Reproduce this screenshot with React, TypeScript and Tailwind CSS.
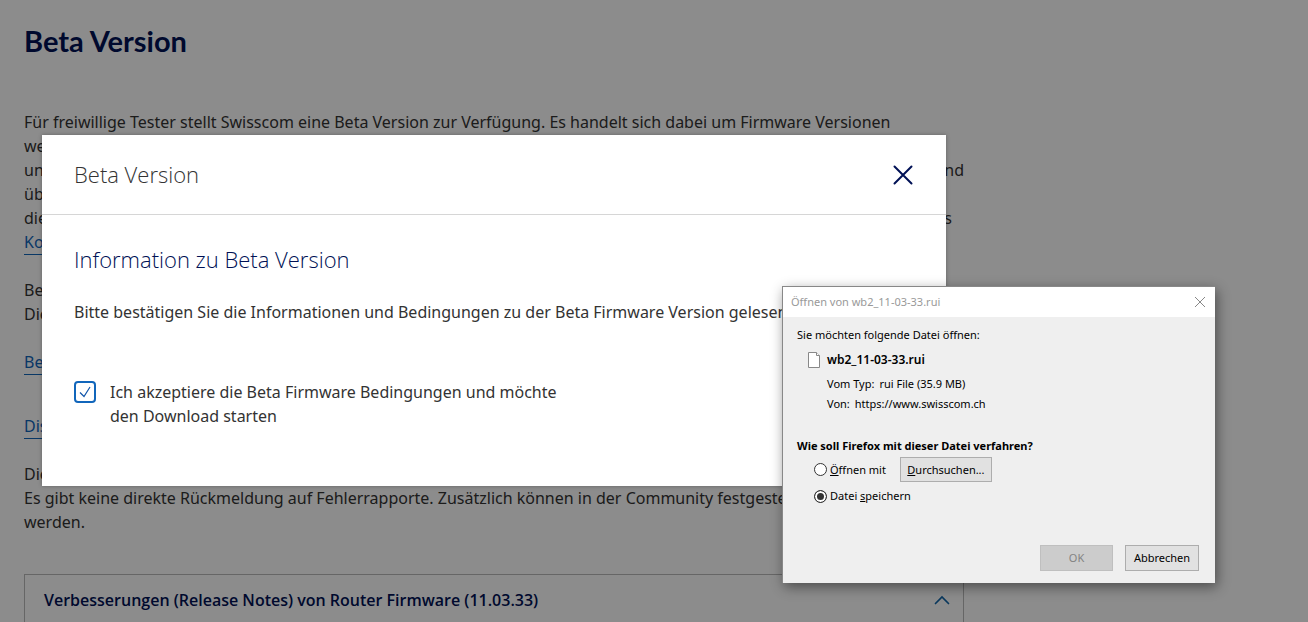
import { useState } from "react";
import type { ReactNode } from "react";

const NAVY = "text-[#001155]";
const OPEN_SANS = "font-['Open_Sans','Noto_Sans',sans-serif]";

function PageLink({ children }: { children: ReactNode }) {
  return (
    <a href="#" className="inline-block h-[25px] border-b border-[#1166bb] text-[#1166bb]">
      {children}
    </a>
  );
}

function PageContent() {
  return (
    <main className="w-full max-w-[988px] px-6 pt-5 text-base leading-6 text-[#333]">
      <h1 className={`font-['Lato','Noto_Sans',sans-serif] text-[29px] leading-[42px] font-bold ${NAVY}`}>Beta Version</h1>

      <div className="mt-12">
        <p>
          Für freiwillige Tester stellt Swisscom eine Beta Version zur Verfügung. Es handelt sich dabei um Firmware Versionen
        </p>
        <p>wel</p>
        <p className="flex justify-between">
          <span>und</span>
          <span>und</span>
        </p>
        <p>über</p>
        <p className="flex justify-between pr-3">
          <span>die</span>
          <span>das</span>
        </p>
        <PageLink>Kont</PageLink>
      </div>

      <div className="mt-[23px]">
        <p>Beta</p>
        <p>Die</p>
      </div>

      <div className="mt-6">
        <PageLink>Beta</PageLink>
      </div>
      <div className="mt-[39px]">
        <PageLink>Disc</PageLink>
      </div>

      <div className="mt-[23px]">
        <p>Die</p>
        <p>
          Es gibt keine direkte Rückmeldung auf Fehlerrapporte. Zusätzlich können in der Community festgestellt
          <br />
          werden.
        </p>
      </div>

      <section className="mt-10 border border-b-0 border-[#bbb]">
        <button type="button" className="flex w-full items-center justify-between pt-[13px] pr-[13px] pb-[15px] pl-[19px] text-left">
          <span className={`font-semibold ${OPEN_SANS} ${NAVY}`}>
            Verbesserungen (Release Notes) von Router Firmware (11.03.33)
          </span>
          <svg aria-hidden="true" viewBox="0 0 16 10" className="h-[10px] w-4" fill="none" stroke="#1166aa" strokeWidth="1.7">
            <path d="M1.5 8.5 8 2l6.500 6.500" strokeLinecap="round" />
          </svg>
        </button>
      </section>
    </main>
  );
}

function BetaModal() {
  const [accepted, setAccepted] = useState(true);

  return (
    <section
      role="dialog"
      aria-labelledby="beta-title"
      className="absolute top-[135px] left-[42px] w-[calc(100%-84px)] max-w-[904px] bg-white text-base leading-6 text-[#333] shadow-[0_0_4px_rgba(0,0,0,0.3)]"
    >
      <header className="flex items-center justify-between border-b border-[#d6d6d6] px-8 py-6">
        <h2 id="beta-title" className={`text-[22px] leading-[31px] font-light ${OPEN_SANS}`}>
          Beta Version
        </h2>
        <button type="button" aria-label="Schliessen">
          <svg viewBox="0 0 22 22" className="size-[22px]" fill="none" stroke="#001155" strokeWidth="2" strokeLinecap="round">
            <path d="M2.500 2.500 19.500 19.500M19.500 2.500 2.500 19.500" />
          </svg>
        </button>
      </header>
      <div className="px-8 pt-7 pb-[58px]">
        <h3 className={`text-[22px] leading-8 font-light ${OPEN_SANS} ${NAVY}`}>Information zu Beta Version</h3>
        <p className="mt-[25px]">
          Bitte bestätigen Sie die Informationen und Bedingungen zu der Beta Firmware Version gelesen
        </p>
        <label className="mt-14 flex max-w-[520px] items-start gap-[14px]">
          <span className="relative mt-px size-[22px] shrink-0">
            <input
              type="checkbox"
              checked={accepted}
              onChange={(e) => setAccepted(e.target.checked)}
              className="block size-[22px] appearance-none rounded-[4px] border-2 border-[#1166bb] bg-white"
            />
            {accepted && (
              <svg
                aria-hidden="true"
                viewBox="0 0 22 22"
                className="pointer-events-none absolute inset-0 size-[22px]"
                fill="none"
                stroke="#1155aa"
                strokeWidth="1.2"
              >
                <path d="M6 11.500 10 15.500 16 6" />
              </svg>
            )}
          </span>
          <span>
            Ich akzeptiere die Beta Firmware Bedingungen und möchte
            <br />
            den Download starten
          </span>
        </label>
      </div>
    </section>
  );
}

function DownloadWindow() {
  const [action, setAction] = useState("save");
  const radio =
    "size-[13px] appearance-none rounded-full border border-[#333] bg-white checked:bg-[#333] checked:shadow-[inset_0_0_0_2px_#fff]";

  return (
    <section
      role="dialog"
      aria-labelledby="download-title"
      className="absolute top-[286px] left-[782px] w-[433px] border-t border-l border-[#888] bg-[#efefef] text-[11px] leading-4 text-black shadow-[2px_4px_12px_rgba(0,0,0,0.45)]"
    >
      <header className="flex h-[30px] items-center justify-between bg-white pr-[9px] pl-2 text-[#999]">
        <h2 id="download-title">Öffnen von wb2_11-03-33.rui</h2>
        <button type="button" aria-label="Schliessen">
          <svg viewBox="0 0 12 12" className="size-3" fill="none" stroke="#888">
            <path d="M1 1 11 11M11 1 1 11" />
          </svg>
        </button>
      </header>

      <div className="px-[14px] pt-[10px] pb-3">
        <p>Sie möchten folgende Datei öffnen:</p>
        <div className="mt-[9px] flex items-center gap-[7px] pl-[11px]">
          <svg aria-hidden="true" viewBox="0 0 12 16" className="h-4 w-3" fill="#fff" stroke="#888">
            <path d="M.5.5h8l3 3v12H.5z" />
            <path d="M8.500.5v3h3" />
          </svg>
          <strong className="text-[12px] font-semibold">wb2_11-03-33.rui</strong>
        </div>
        <dl className="mt-[6px] pl-[30px] leading-5">
          <div className="flex gap-[5px]">
            <dt>Vom Typ:</dt>
            <dd>rui File (35.9 MB)</dd>
          </div>
          <div className="flex gap-[5px]">
            <dt>Von:</dt>
            <dd>https://www.swisscom.ch</dd>
          </div>
        </dl>

        <fieldset className="mt-6">
          <legend className="font-bold">Wie soll Firefox mit dieser Datei verfahren?</legend>
          <div className="mt-[3px] flex items-center gap-[14px] pl-[17px]">
            <label className="flex items-center gap-[3px]">
              <input type="radio" name="action" checked={action === "open"} onChange={() => setAction("open")} className={radio} />
              <span>
                <u>Ö</u>ffnen mit
              </span>
            </label>
            <button type="button" className="h-[25px] w-[92px] border border-[#adadad] bg-[#e1e1e1]">
              <u>D</u>urchsuchen...
            </button>
          </div>
          <label className="mt-[6px] flex items-center gap-[3px] pl-[17px]">
            <input type="radio" name="action" checked={action === "save"} onChange={() => setAction("save")} className={radio} />
            <span>
              Datei <u>s</u>peichern
            </span>
          </label>
        </fieldset>

        <div className="mt-[41px] flex justify-end gap-3 pr-[2px]">
          <button type="button" disabled className="h-[26px] w-[73px] border border-[#bfbfbf] bg-[#ccc] text-[#838383]">
            OK
          </button>
          <button type="button" className="h-[26px] w-[74px] border border-[#adadad] bg-[#e1e1e1]">
            Abbrechen
          </button>
        </div>
      </div>
    </section>
  );
}

export default function App() {
  return (
    <div className="relative h-screen overflow-hidden bg-white font-['Noto_Sans','Open_Sans',sans-serif]">
      <PageContent />
      <div aria-hidden="true" className="absolute inset-0 bg-black/45" />
      <BetaModal />
      <DownloadWindow />
    </div>
  );
}
